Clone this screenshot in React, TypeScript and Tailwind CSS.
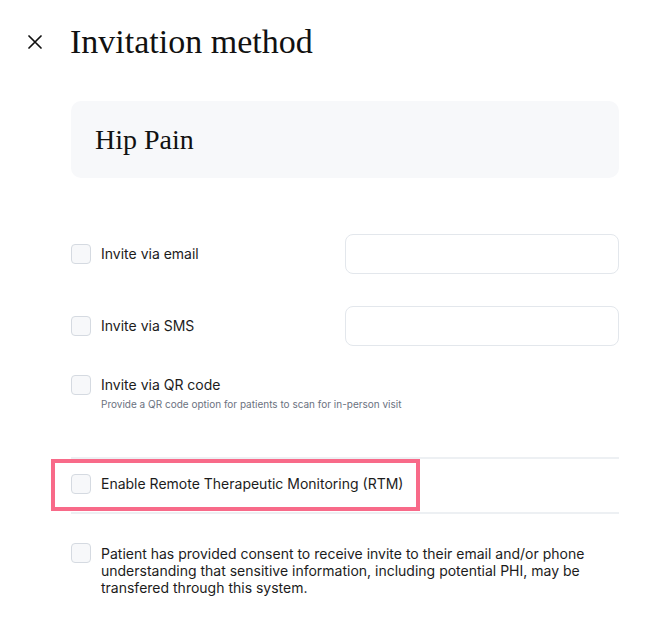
import React from "react";

function Box() {
  return (
    <div className="w-[20px] h-[20px] shrink-0 rounded-[4px] border border-[#d5dae1] bg-[#f7f8fa]" />
  );
}

export default function App() {
  return (
    <div
      className="w-[654px] h-[617px] bg-white pt-[24px] text-[#1c1c1c]"
      style={{ fontFamily: "Inter, 'Liberation Sans', sans-serif" }}
    >
      <div className="flex items-center h-[36px] pl-[28px]">
        <svg width="14" height="14" viewBox="0 0 14 14" className="shrink-0">
          <path d="M1 1L13 13M13 1L1 13" stroke="#111" strokeWidth="1.7" strokeLinecap="round" />
        </svg>
        <h1
          className="ml-[28px] text-[34px] leading-[36px] text-[#111]"
          style={{ fontFamily: "'Liberation Serif', serif" }}
        >
          Invitation method
        </h1>
      </div>

      <div className="ml-[71px] w-[548px] flex flex-col">
        <div className="mt-[41px] h-[77px] rounded-[10px] bg-[#f7f8fa] flex items-center px-[24px]">
          <span
            className="text-[28px] leading-none text-[#111]"
            style={{ fontFamily: "'Liberation Serif', serif" }}
          >
            Hip Pain
          </span>
        </div>

        <div className="mt-[56px] h-[40px] flex items-center">
          <Box />
          <span className="ml-[10px] text-[14px] leading-5 flex-1">Invite via email</span>
          <input className="w-[274px] h-[40px] rounded-[8px] border border-[#e3e7ec] bg-white outline-none px-3 text-sm" />
        </div>

        <div className="mt-[32px] h-[40px] flex items-center">
          <Box />
          <span className="ml-[10px] text-[14px] leading-5 flex-1">Invite via SMS</span>
          <input className="w-[274px] h-[40px] rounded-[8px] border border-[#e3e7ec] bg-white outline-none px-3 text-sm" />
        </div>

        <div className="mt-[29px] flex items-start">
          <Box />
          <div className="ml-[10px] flex flex-col">
            <span className="text-[14px] leading-5">Invite via QR code</span>
            <span className="mt-[2px] text-[10px] leading-[14px] text-[#6b7280]">
              Provide a QR code option for patients to scan for in-person visit
            </span>
          </div>
        </div>

        <div className="mt-[46px] h-[2px] bg-[#edf0f3]" />

        <div className="relative mt-[15px] h-[20px] flex items-center">
          <Box />
          <span className="ml-[10px] text-[14px] leading-5">
            Enable Remote Therapeutic Monitoring (RTM)
          </span>
          <div className="absolute -left-[20px] -top-[15px] w-[369px] h-[52px] border-4 border-[#f86a89] pointer-events-none" />
        </div>

        <div className="mt-[18px] h-[2px] bg-[#edf0f3]" />

        <div className="mt-[29px] flex items-start">
          <Box />
          <p className="ml-[10px] pt-[2px] text-[14px] leading-[17px] pr-[20px]">
            Patient has provided consent to receive invite to their email and/or phone
            understanding that sensitive information, including potential PHI, may be
            transfered through this system.
          </p>
        </div>
      </div>
    </div>
  );
}
